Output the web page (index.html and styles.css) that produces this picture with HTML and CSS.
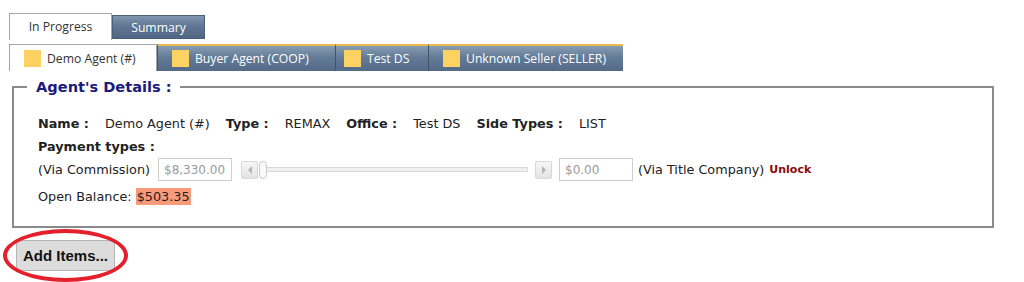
FILE: index.html
```html
<!DOCTYPE html>
<html lang="en">
<head>
  <meta charset="UTF-8">
  <title>Agent's Details</title>
  <link rel="stylesheet" href="styles.css">
</head>
<body>

<div class="page">

  <div class="main-tabs">
    <div class="main-tab active">In Progress</div>
    <div class="main-tab">Summary</div>
  </div>

  <div class="agent-tabs">
    <div class="agent-tab active"><span class="swatch"></span>Demo Agent (#)</div>
    <div class="agent-tab"><span class="swatch"></span>Buyer Agent (COOP)</div>
    <div class="agent-tab"><span class="swatch"></span>Test DS</div>
    <div class="agent-tab"><span class="swatch"></span>Unknown Seller (SELLER)</div>
  </div>

  <fieldset class="details">
    <legend>Agent's Details :</legend>

    <div class="info-row">
      <b>Name :</b><span>Demo Agent (#)</span>
      <b>Type :</b><span>REMAX</span>
      <b>Office :</b><span>Test DS</span>
      <b>Side Types :</b><span>LIST</span>
    </div>

    <div class="pay-title"><b>Payment types :</b></div>

    <div class="pay-row">
      <span>(Via Commission)</span>
      <input type="text" class="amount" value="$8,330.00" disabled>
      <div class="slider">
        <span class="slider-btn">
          <svg width="6" height="8" viewBox="0 0 6 8"><path d="M5 0 L1 4 L5 8 Z" fill="#b5b5b5"/></svg>
        </span>
        <span class="thumb"></span>
        <span class="track"></span>
        <span class="slider-btn">
          <svg width="6" height="8" viewBox="0 0 6 8"><path d="M1 0 L5 4 L1 8 Z" fill="#b5b5b5"/></svg>
        </span>
      </div>
      <input type="text" class="amount right" value="$0.00" disabled>
      <span>(Via Title Company)</span>
      <a href="#" class="unlock">Unlock</a>
    </div>

    <div class="balance">Open Balance: <span class="due">$503.35</span></div>
  </fieldset>

  <div class="actions">
    <button type="button" class="add-btn">Add Items...</button>
  </div>

</div>

</body>
</html>
```

FILE: styles.css
```css
body {
  margin: 0;
  font-family: 'DejaVu Sans', Verdana, sans-serif;
  font-size: 12.8px;
  color: #222;
  background: #fff;
}
.page {
  padding: 13px 0 0 9px;
}
.main-tabs {
  display: flex;
  align-items: flex-end;
  height: 27px;
}
.main-tab {
  font-family: 'Open Sans', sans-serif;
  font-size: 12.2px;
  color: #fff;
  width: 93px;
  height: 24px;
  line-height: 23px;
  text-align: center;
  box-sizing: border-box;
  margin-bottom: 1px;
  border: 1px solid #4a5f78;
  background: linear-gradient(#8197b0, #5f7793 45%, #4f6784);
}
.main-tab.active {
  width: 103px;
  height: 27px;
  line-height: 26px;
  margin-bottom: 0;
  color: #333;
  background: #fff;
  border: 1px solid #a7a7a7;
  border-bottom: none;
}
.agent-tabs {
  display: flex;
  margin-top: 4px;
  height: 27px;
}
.agent-tab {
  font-family: 'Open Sans', sans-serif;
  font-size: 12.2px;
  color: #fff;
  display: flex;
  align-items: center;
  gap: 6px;
  box-sizing: border-box;
  height: 27px;
  padding: 0 0 0 14px;
  border-top: 2px solid #e9b94c;
  border-left: 1px solid #3f536b;
  background: linear-gradient(#889db4, #637b97 45%, #536b88);
}
.agent-tab:nth-child(2) { width: 178px; }
.agent-tab:nth-child(3) { width: 93px; padding-left: 8px; }
.agent-tab:nth-child(4) { width: 195px; }
.agent-tab.active {
  width: 148px;
  color: #333;
  background: #fff;
  border: 1px solid #a7a7a7;
  border-bottom: none;
}
.swatch {
  width: 17px;
  height: 17px;
  background: #fdd162;
  flex-shrink: 0;
}
.details {
  margin: 7px 30px 0 3px;
  padding: 20px 24px 20px;
  border: 2px solid #8a8a8a;
}
.details legend {
  margin-left: -11px;
  padding: 0 8px 0 9px;
  color: #1b1b7d;
  font-weight: bold;
  font-size: 14.6px;
}
.info-row {
  display: flex;
  gap: 16px;
  line-height: 18px;
}
.pay-title {
  margin-top: 5px;
  line-height: 18px;
}
.pay-row {
  display: flex;
  align-items: center;
  margin-top: 1px;
  height: 25px;
}
.amount {
  width: 74px;
  height: 23px;
  box-sizing: border-box;
  border: 1px solid #cfcfcf;
  background: #fff;
  color: #9a9a9a;
  font-family: 'DejaVu Sans', sans-serif;
  font-size: 12px;
  padding: 0 5px;
  margin: 0 9px 0 8px;
}
.amount.right {
  margin: 0 5px 0 7px;
}
.slider {
  display: flex;
  align-items: center;
  width: 311px;
}
.slider-btn {
  width: 17px;
  height: 18px;
  box-sizing: border-box;
  border: 1px solid #d8d8d8;
  border-radius: 2px;
  background: linear-gradient(#f6f6f6, #e3e3e3);
  display: flex;
  align-items: center;
  justify-content: center;
}
.thumb {
  width: 8px;
  height: 18px;
  box-sizing: border-box;
  border: 1px solid #c9c9c9;
  border-radius: 4px;
  background: #fafafa;
  margin-left: 1px;
  position: relative;
  z-index: 1;
}
.track {
  flex: 1;
  height: 5px;
  box-sizing: border-box;
  border: 1px solid #d8d8d8;
  background: #f0f0f0;
  margin: 0 7px 0 -1px;
}
.unlock {
  color: #8b0a0a;
  font-weight: bold;
  font-size: 11px;
  text-decoration: none;
  margin-left: 5px;
}
.balance {
  margin-top: 6px;
  line-height: 18px;
}
.due {
  background: #f99a7a;
  padding: 1px 1px;
}
.actions {
  position: relative;
  width: 125px;
  height: 53px;
  margin: 1px 0 0 -6px;
  display: flex;
  align-items: center;
  justify-content: center;
}
/* red marker ring around the button */
.actions::after {
  content: '';
  position: absolute;
  top: 0;
  left: 0;
  right: 0;
  bottom: 0;
  border: 4px solid #e3202b;
  border-radius: 50%;
  pointer-events: none;
}
.add-btn {
  width: 99px;
  height: 31px;
  font-family: 'Liberation Sans', Arial, sans-serif;
  font-weight: bold;
  font-size: 15px;
  color: #111;
  background: #dcdcdc;
  border: 1px solid #b4b4b4;
  border-radius: 2px;
}
```
